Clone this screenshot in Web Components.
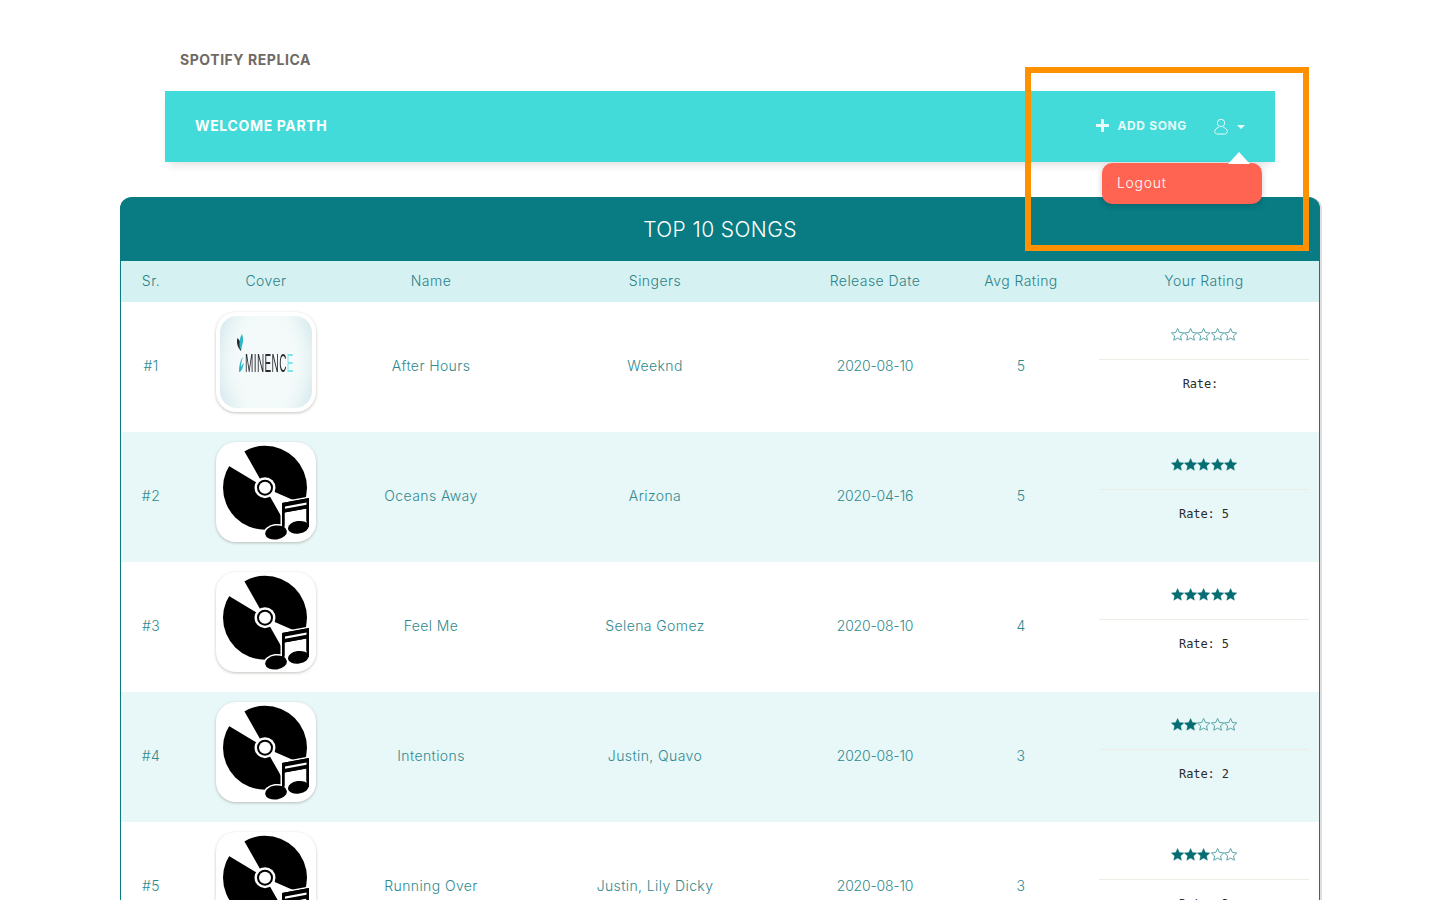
<!DOCTYPE html>
<html lang="en">
<head>
    <meta charset="UTF-8">
    <title>Spotify Replica</title>
    <style>
        html, body {
            height: 900px;
            overflow: hidden;
        }
        body {
            margin: 0;
            background: #fff;
            font-family: Inter, "Liberation Sans", sans-serif;
        }
    </style>
</head>
<body>
    <app-page>
        <app-navbar slot="nav" brand="SPOTIFY REPLICA" welcome="WELCOME PARTH"></app-navbar>
        <songs-card slot="main" title="TOP 10 SONGS">
            <song-row sr="#1" name="After Hours" singers="Weeknd" date="2020-08-10" avg="5" rate=""><cover-art slot="cover" kind="logo"></cover-art></song-row>
            <song-row sr="#2" name="Oceans Away" singers="Arizona" date="2020-04-16" avg="5" rate="5"><cover-art slot="cover"></cover-art></song-row>
            <song-row sr="#3" name="Feel Me" singers="Selena Gomez" date="2020-08-10" avg="4" rate="5"><cover-art slot="cover"></cover-art></song-row>
            <song-row sr="#4" name="Intentions" singers="Justin, Quavo" date="2020-08-10" avg="3" rate="2"><cover-art slot="cover"></cover-art></song-row>
            <song-row sr="#5" name="Running Over" singers="Justin, Lily Dicky" date="2020-08-10" avg="3" rate="3"><cover-art slot="cover"></cover-art></song-row>
        </songs-card>
        <mark-box slot="overlay"></mark-box>
    </app-page>

    <script>
        // star path used by the rating widget
        const STAR = 'M12 2.2l2.9 6.4 7 .8-5.2 4.7 1.4 6.9L12 17.6l-6.1 3.4 1.4-6.9L2.100 9.400l7-.8z';

        class AppPage extends HTMLElement {
            constructor() {
                super();
                this.attachShadow({mode: 'open'}).innerHTML = `
                    <style>
                        :host { display: block; position: relative; height: 900px; overflow: hidden; }
                        .nav { padding: 0 165px; position: relative; z-index: 2; }
                        .main { padding: 35px 120px 0; }
                    </style>
                    <div class="nav"><slot name="nav"></slot></div>
                    <div class="main"><slot name="main"></slot></div>
                    <slot name="overlay"></slot>`;
            }
        }

        class AppNavbar extends HTMLElement {
            constructor() {
                super();
                this.attachShadow({mode: 'open'}).innerHTML = `
                    <style>
                        :host { display: block; }
                        .brand {
                            height: 91px; padding-left: 15px; box-sizing: border-box;
                            display: flex; align-items: center; padding-top: 28px;
                            font-size: 14px; font-weight: 700; color: #6f6a64; letter-spacing: .55px;
                        }
                        .bar {
                            height: 71px; background: #43dbd9; color: #fff;
                            box-shadow: 0 6px 10px -4px rgba(0,0,0,.15);
                            display: flex; align-items: center; padding: 0 30px 2px; box-sizing: border-box;
                        }
                        .welcome { flex: 1; font-size: 14px; font-weight: 700; letter-spacing: .65px; }
                        .add {
                            display: flex; align-items: center; gap: 8px;
                            font-size: 12px; font-weight: 700; letter-spacing: .65px; color: #e6fbfa;
                        }
                        .user { position: relative; display: flex; align-items: center; gap: 9px; margin: 2px 0 0 27px; }
                        .caret { width: 0; height: 0; border: 4px solid transparent; border-top-color: #e6fbfa; border-bottom: 0; }
                        logout-menu { position: absolute; top: 45px; right: -17px; }
                        svg { display: block; }
                    </style>
                    <div class="brand">${this.getAttribute('brand')}</div>
                    <div class="bar">
                        <div class="welcome">${this.getAttribute('welcome')}</div>
                        <div class="add">
                            <svg width="13" height="13" viewBox="0 0 13 13"><path d="M5 0h3v5h5v3H8v5H5V8H0V5h5z" fill="#e6fbfa"/></svg>
                            ADD SONG
                        </div>
                        <div class="user">
                            <svg width="14" height="17" viewBox="0 0 14 17" fill="none" stroke="#e6fbfa" stroke-width="1"><circle cx="7" cy="5" r="3.700"/><path d="M4.800 9.300C2.500 10 .7 11.400.7 13.400c0 1.600 1 2.600 2.600 2.600h7.400c1.600 0 2.600-1 2.600-2.600 0-2-1.800-3.400-4.100-4.100"/></svg>
                            <span class="caret"></span>
                            <logout-menu></logout-menu>
                        </div>
                    </div>`;
            }
        }

        class LogoutMenu extends HTMLElement {
            constructor() {
                super();
                this.attachShadow({mode: 'open'}).innerHTML = `
                    <style>
                        :host { display: block; width: 160px; }
                        .tip {
                            position: absolute; top: -11px; right: 12px; width: 0; height: 0;
                            border-left: 11px solid transparent; border-right: 11px solid transparent;
                            border-bottom: 12px solid #fff;
                        }
                        .item {
                            height: 41px; box-sizing: border-box; padding: 0 15px 2px;
                            display: flex; align-items: center;
                            background: #ff6352; color: #fff; border-radius: 10px;
                            font-size: 14px; font-weight: 300; letter-spacing: .7px;
                            box-shadow: 0 2px 6px rgba(0,0,0,.18);
                        }
                    </style>
                    <div class="item">Logout</div>
                    <div class="tip"></div>`;
            }
        }

        class SongsCard extends HTMLElement {
            constructor() {
                super();
                this.attachShadow({mode: 'open'}).innerHTML = `
                    <style>
                        :host {
                            display: block; --cols: 60px 170px 160px 288px 152px 140px 1fr;
                            box-sizing: border-box; border: 1px solid #087b83; border-top: 0;
                            border-radius: 12px 12px 0 0; box-shadow: 2px 0 0 #dfdfdf;
                        }
                        .head {
                            height: 64px; margin: 0 -1px; background: #087b83; color: #fff;
                            border-radius: 12px 12px 0 0;
                            display: flex; align-items: center; justify-content: center;
                            font-size: 21px; font-weight: 300; letter-spacing: .4px;
                        }
                        .cols {
                            height: 41px; padding-bottom: 2px; box-sizing: border-box; background: #d6f1f2; color: #2b8288;
                            display: grid; grid-template-columns: var(--cols);
                            align-items: center; text-align: center;
                            font-size: 14px; font-weight: 300; letter-spacing: .45px;
                        }
                        .cols span:last-child { padding: 0 10px 0 8px; }
                    </style>
                    <div class="head">${this.getAttribute('title')}</div>
                    <div class="cols">
                        <span>Sr.</span><span>Cover</span><span>Name</span><span>Singers</span>
                        <span>Release Date</span><span>Avg Rating</span><span>Your Rating</span>
                    </div>
                    <slot></slot>`;
            }
        }

        class SongRow extends HTMLElement {
            constructor() {
                super();
                const a = n => this.getAttribute(n);
                this.attachShadow({mode: 'open'}).innerHTML = `
                    <style>
                        :host {
                            display: grid; grid-template-columns: var(--cols); height: 130px;
                            align-items: center; text-align: center; background: #fff;
                            color: #2f8a8f; font-size: 14px; font-weight: 300; letter-spacing: .4px;
                        }
                        :host(:nth-of-type(even)) { background: #e8f7f8; }
                        .cover { display: flex; justify-content: center; align-self: start; padding-top: 10px; }
                        .sr, .txt { margin-top: -3px; }
                        .date { letter-spacing: -.2px; }
                    </style>
                    <div class="sr">${a('sr')}</div>
                    <div class="cover"><slot name="cover"></slot></div>
                    <div class="txt">${a('name')}</div>
                    <div class="txt">${a('singers')}</div>
                    <div class="txt date">${a('date')}</div>
                    <div class="txt">${a('avg')}</div>
                    <star-rating value="${a('rate')}"></star-rating>`;
            }
        }

        class StarRating extends HTMLElement {
            constructor() {
                super();
                const value = this.getAttribute('value');
                const n = Number(value) || 0;
                let stars = '';
                for (let i = 0; i < 5; i++) {
                    stars += i < n
                        ? `<svg width="13.200" height="13.200" viewBox="1.500 1.500 21 21"><path d="${STAR}" fill="#066d72" stroke="#066d72" stroke-width=".6"/></svg>`
                        : `<svg width="13.200" height="13.200" viewBox="1.500 1.500 21 21"><path d="${STAR}" fill="none" stroke="#4f9fa3" stroke-width="1.500"/></svg>`;
                }
                this.attachShadow({mode: 'open'}).innerHTML = `
                    <style>
                        :host { display: block; padding: 0 10px 0 8px; align-self: start; }
                        .stars { height: 58px; padding-top: 26px; box-sizing: border-box; display: flex; justify-content: center; border-bottom: 1px solid #efece6; }
                        svg { display: block; }
                        .rate {
                            margin-top: 16px; white-space: pre; text-align: center;
                            font: 12px/16px "DejaVu Sans Mono", monospace; letter-spacing: -.1px; color: #2b2b2b;
                        }
                    </style>
                    <div class="stars">${stars}</div>
                    <div class="rate">Rate: ${value}</div>`;
            }
        }

        class CoverArt extends HTMLElement {
            constructor() {
                super();
                const logo = `
                    <div class="logo">
                        <svg width="92" height="92" viewBox="0 0 92 92">
                            <path d="M17.500 22c3 3 4.500 8 3.500 13-3-3-5-8-3.500-13z" fill="#26262a"/>
                            <path d="M22 18c2 5 1 11-2 16-1-6-1-11 2-16z" fill="#2bb7c7"/>
                            <path d="M23 41c-3 3-4 10-4 15 3 0 4-6 5-9-2 2-2 2-3 4 0-4 1-7 2-10z" fill="#2bb7c7"/>
                            <text x="25" y="56" font-family="Liberation Sans" font-weight="400" font-size="25" letter-spacing="1" transform="translate(25 0) scale(.4 1) translate(-25 0)" fill="#2a2a30">MINENC<tspan fill="#7fe3ea">E</tspan></text>
                        </svg>
                    </div>`;
                const disc = `
                    <svg width="100" height="100" viewBox="0 0 100 100">
                        <circle cx="49" cy="45.700" r="42"/>
                        <path d="M49 45.700L24.500 2.500-2 14 8 21zM49 45.700L73.500 88.900 100 100V68z" fill="#fff"/>
                        <circle cx="49" cy="45.700" r="10.500" fill="#fff"/>
                        <circle cx="49" cy="45.700" r="8"/>
                        <circle cx="49" cy="45.700" r="6" fill="#fff"/>
                        <g stroke="#fff" stroke-width="3" paint-order="stroke">
                            <path d="M66 61L93 56V85H90.500V66.500L68.500 70.500V90H66z"/>
                            <ellipse cx="60" cy="90.500" rx="11" ry="7" transform="rotate(-8 60 90.500)"/>
                            <ellipse cx="82.300" cy="85.300" rx="10.500" ry="6.300" transform="rotate(-8 82.300 85.300)"/>
                        </g>
                        <path d="M66 61L93 56V85H90.500V66.500L68.500 70.500V90H66z"/>
                        <path d="M69 64.500L90.500 60.500V62.800L69 66.800z" fill="#fff"/>
                    </svg>`;
                this.attachShadow({mode: 'open'}).innerHTML = `
                    <style>
                        :host {
                            display: block; width: 100px; height: 100px; background: #fff;
                            border-radius: 20px; overflow: hidden;
                            box-shadow: 0 1px 3px rgba(90,80,70,.35);
                        }
                        svg { display: block; }
                        .logo {
                            margin: 4px; width: 92px; height: 92px; border-radius: 17px; overflow: hidden;
                            background:
                                radial-gradient(ellipse at 50% 50%, #f4fafa 45%, rgba(244,250,250,0) 100%),
                                linear-gradient(90deg, #cfe6ea, #f2f9f9 30%, #f2f9f9 70%, #cfe6ea);
                        }
                        .logo svg { filter: blur(.55px); }
                    </style>
                    ${this.getAttribute('kind') === 'logo' ? logo : disc}`;
            }
        }

        // orange highlight drawn over the screenshot
        class MarkBox extends HTMLElement {
            constructor() {
                super();
                this.attachShadow({mode: 'open'}).innerHTML = `
                    <style>
                        :host {
                            position: absolute; left: 1025px; top: 67px; width: 284px; height: 184px;
                            box-sizing: border-box; border: 6px solid #ff9000; z-index: 5;
                        }
                    </style>`;
            }
        }

        customElements.define('star-rating', StarRating);
        customElements.define('cover-art', CoverArt);
        customElements.define('song-row', SongRow);
        customElements.define('songs-card', SongsCard);
        customElements.define('logout-menu', LogoutMenu);
        customElements.define('app-navbar', AppNavbar);
        customElements.define('mark-box', MarkBox);
        customElements.define('app-page', AppPage);
    </script>
</body>
</html>
